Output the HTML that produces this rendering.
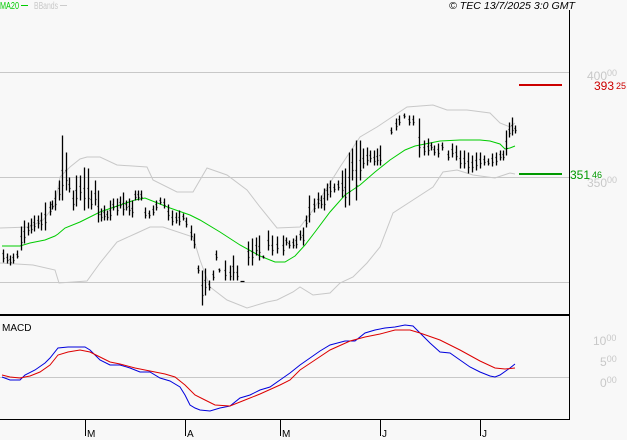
<!DOCTYPE html>
<html><head><meta charset="utf-8"><style>
html,body{margin:0;padding:0;background:#f8f8f8;}
body{width:627px;height:440px;overflow:hidden;position:relative;font-family:"Liberation Sans",Arial,sans-serif;}
svg{position:absolute;left:0;top:0;}
</style></head><body>
<svg width="627" height="440" viewBox="0 0 627 440" xmlns="http://www.w3.org/2000/svg">
<rect width="627" height="440" fill="#f8f8f8"/>
<g shape-rendering="crispEdges">
<line x1="0" y1="72.5" x2="569" y2="72.5" stroke="#c8c8c8"/>
<line x1="0" y1="177.5" x2="569" y2="177.5" stroke="#c8c8c8"/>
<line x1="0" y1="282.5" x2="569" y2="282.5" stroke="#c8c8c8"/>
<line x1="0" y1="377.5" x2="569" y2="377.5" stroke="#c8c8c8"/>
<line x1="569.5" y1="10" x2="569.5" y2="420" stroke="#000"/>
<line x1="0" y1="315" x2="569" y2="315" stroke="#000" stroke-width="2"/>
<line x1="0" y1="419.5" x2="570" y2="419.5" stroke="#000"/>
<rect x="519" y="84" width="43" height="2" fill="#cc0000"/>
<rect x="519" y="173" width="43" height="2" fill="#009900"/>
<path d="M85.5 420V436M185.5 420V436M280.5 420V436M380.5 420V436M480.5 420V436" stroke="#000"/>
<line x1="21" y1="5.5" x2="28" y2="5.5" stroke="#00cc00"/>
<line x1="60" y1="5.5" x2="67" y2="5.5" stroke="#cccccc"/>
</g>
<!-- bands -->
<polyline fill="none" stroke="#c8c8c8" points="0,228 30,227 43,220 55,205 60,177 70,167 80,159 87,157 100,157 117,165 147,167 153,180 177,192 193,192 207,168 227,175 247,190 260,207 277,228 300,227 313,210 330,183 340,167 360,137 377,127 407,107 433,105 447,110 467,110 490,113 500,123 510,127 515,123"/>
<polyline fill="none" stroke="#c8c8c8" points="0,263 33,265 55,270 59,283 87,281 100,263 117,242 137,233 150,227 163,227 193,237 200,260 210,287 227,300 247,308 267,302 277,300 293,292 300,287 313,295 330,293 340,283 353,277 367,263 380,247 393,213 413,200 433,187 443,172 457,170 473,175 495,178 510,173 515,174"/>
<!-- MA -->
<polyline fill="none" stroke="#00cc00" points="2,246 20,246 30,243 45,240 55,236 58,234 65,228 80,222 100,212 120,205 135,200 145,198 155,202 170,208 190,215 200,220 220,232 240,245 260,256 275,262 285,262 295,256 305,245 315,232 330,212 345,195 360,185 375,172 390,160 405,150 415,146 430,143 440,141 460,140 480,140 490,141 500,144 505,149 510,148 515,146"/>
<!-- bars -->
<path fill="none" stroke="#000" stroke-width="1.3" transform="translate(0.5,0.5)" d="
M3 249V262m-1-9h1m0 5h1 M7 253V263m-1-6h1m0 3h1 M10 255V265m-1-6h1m0 3h1 M13 253V263m-1-6h1m0 3h1 M17 250V258m-1-4h1m0 2h1
M21 226V250m-1-14h1m0 6h1 M24 220V243m-1-12h1m0 6h1 M28 222V235m-1-8h1m0 3h1 M31 218V233m-1-8h1m0 4h1 M34 215V231m-1-9h1m0 4h1
M38 215V228m-1-8h1m0 3h1 M41 212V230m-1-10h1m0 4h1 M45 202V230m-1-16h1m0 8h1 M50 201V215m-1-8h1m0 4h1 M52 200V209m-1-5h1m0 2h1
M55 190V210m-1-12h1m0 6h1 M59 180V200m-1-12h1m0 6h1 M62 135V200m-1-30h1m0 15h1 M66 152V190m-1-20h1m0 10h1 M69 177V192m-1-8h1m0 4h1
M73 190V210m-1-12h1m0 6h1 M76 175V206m-1-16h1m0 8h1 M80 175V200m-1-14h1m0 6h1 M84 167V210m-1-22h1m0 10h1 M88 168V208m-1-20h1m0 10h1
M91 190V209m-1-10h1m0 5h1 M95 180V205m-1-12h1m0 6h1 M98 190V222m-1-16h1m0 8h1 M101 208V221m-1-7h1m0 3h1 M104 205V220m-1-8h1m0 4h1
M107 210V220m-1-6h1m0 3h1 M110 200V220m-1-10h1m0 5h1 M113 198V210m-1-6h1m0 3h1 M117 198V215m-1-9h1m0 4h1 M120 196V208m-1-6h1m0 3h1
M123 192V215m-1-12h1m0 6h1 M126 200V210m-1-6h1m0 3h1 M129 198V215m-1-9h1m0 4h1 M132 200V217m-1-9h1m0 4h1 M135 190V200m-1-6h1m0 3h1
M138 190V200m-1-6h1m0 3h1 M141 190V200m-1-6h1m0 3h1 M145 207V218m-1-6h1m0 3h1 M149 210V218m-1-5h1m0 2h1 M153 205V215m-1-6h1m0 3h1
M156 200V210m-1-6h1m0 3h1 M160 197V204m-1-4h1m0 2h1 M164 198V208m-1-6h1m0 3h1 M168 204V220m-1-9h1m0 4h1 M172 210V225m-1-8h1m0 4h1
M176 212V223m-1-6h1m0 3h1 M179 210V225m-1-8h1m0 4h1 M183 213V220m-1-4h1m0 2h1 M186 217V227m-1-6h1m0 3h1 M191 225V240m-1-8h1m0 4h1
M194 233V248m-1-8h1m0 4h1 M198 265V273m-1-5h1m0 2h1 M202 270V305m-1-20h1m0 10h1 M205 268V295m-1-15h1m0 7h1 M209 280V290m-1-6h1m0 3h1
M213 270V280m-1-6h1m0 3h1 M216 250V260m-1-6h1m0 3h1 M219 268V272m-1-3h1m0 1h1 M225 260V280m-1-10h1m0 5h1 M230 265V280m-1-8h1m0 4h1
M233 255V280m-1-14h1m0 6h1 M237 265V280m-1-8h1m0 4h1 M240 281H244 M248 241V265m-1-14h1m0 6h1 M252 238V265m-1-14h1m0 6h1
M256 237V255m-1-10h1m0 5h1 M259 235V260m-1-14h1m0 6h1 M263 255V258m-1-2h1m0 1h1 M268 230V250m-1-10h1m0 5h1 M272 235V255m-1-10h1m0 5h1
M277 236V253m-1-9h1m0 4h1 M283 235V255m-1-10h1m0 5h1 M286 237V245m-1-5h1m0 2h1 M289 240V248m-1-5h1m0 2h1 M293 238V248m-1-6h1m0 3h1
M296 235V248m-1-8h1m0 4h1 M300 230V240m-1-6h1m0 3h1 M303 227V245m-1-10h1m0 5h1 M306 215V227m-1-7h1m0 3h1 M309 195V222m-1-15h1m0 7h1
M314 198V212m-1-8h1m0 4h1 M318 192V208m-1-9h1m0 4h1 M321 195V208m-1-8h1m0 4h1 M324 188V210m-1-12h1m0 6h1 M327 183V200m-1-10h1m0 4h1
M330 180V197m-1-10h1m0 4h1 M334 183V192m-1-5h1m0 2h1 M338 180V190m-1-6h1m0 3h1 M342 170V197m-1-14h1m0 7h1 M345 168V207m-1-20h1m0 10h1
M349 152V205m-1-28h1m0 14h1 M352 148V180m-1-18h1m0 8h1 M356 140V200m-1-30h1m0 15h1 M360 140V180m-1-20h1m0 10h1 M363 148V168m-1-10h1m0 5h1
M367 147V165m-1-10h1m0 5h1 M370 150V162m-1-7h1m0 3h1 M374 150V165m-1-8h1m0 4h1 M377 148V165m-1-9h1m0 4h1 M380 145V165m-1-10h1m0 5h1
M391 127V134m-1-4h1m0 2h1 M396 118V130m-1-7h1m0 3h1 M399 115V125m-1-6h1m0 3h1 M404 113V118m-1-3h1m0 1h1 M409 115V125m-1-6h1m0 3h1
M413 115V125m-1-6h1m0 3h1 M419 118V157m-1-20h1m0 10h1 M424 140V155m-1-8h1m0 4h1 M428 138V155m-1-9h1m0 4h1 M431 142V150m-1-5h1m0 2h1
M434 145V155m-1-6h1m0 3h1 M438 143V157m-1-8h1m0 4h1 M442 142V150m-1-5h1m0 2h1 M448 150V160m-1-6h1m0 3h1 M452 143V157m-1-8h1m0 4h1
M456 145V160m-1-8h1m0 4h1 M460 150V168m-1-10h1m0 5h1 M464 150V168m-1-10h1m0 5h1 M468 152V173m-1-12h1m0 6h1 M472 155V172m-1-10h1m0 5h1
M476 152V170m-1-10h1m0 5h1 M480 152V168m-1-9h1m0 4h1 M484 155V165m-1-6h1m0 3h1 M488 158V165m-1-4h1m0 2h1 M492 153V166m-1-8h1m0 4h1
M496 152V165m-1-8h1m0 4h1 M500 150V160m-1-6h1m0 3h1 M503 150V160m-1-6h1m0 3h1 M506 130V155m-1-14h1m0 7h1 M509 122V137m-1-8h1m0 4h1
M512 117V135m-1-10h1m0 5h1 M515 125V133m-1-5h1m0 2h1"/>
<!-- MACD -->
<polyline fill="none" stroke="#0000dd" points="2,377 10,380 20,380 25,375 35,370 45,363 50,358 58,348 68,347 78,347 85,347 90,350 100,360 110,365 120,365 130,368 140,372 150,372 160,378 170,381 180,387 185,395 190,405 195,408 200,410 210,411 220,408 230,406 240,398 250,395 260,390 270,387 280,380 290,373 300,365 310,358 320,351 330,345 345,341 355,341 365,333 375,330 385,328 395,327 405,325 413,326 420,333 430,343 440,352 450,353 460,360 470,367 480,372 490,376 495,377 500,375 510,368 515,364"/>
<polyline fill="none" stroke="#dd0000" points="2,375 10,377 20,378 30,376 40,372 50,365 58,355 68,352 80,350 90,352 100,357 110,362 120,364 135,368 150,371 165,374 175,377 185,385 195,395 205,400 215,405 230,406 245,400 260,394 280,385 290,380 300,370 315,360 330,350 350,341 365,337 380,334 395,330 410,330 420,333 440,340 460,350 480,361 495,368 505,369 515,368"/>
<!-- text -->
<g font-family="Liberation Sans, Arial, sans-serif" font-size="10">
<text x="0" y="9" fill="#00cc00" textLength="19" lengthAdjust="spacingAndGlyphs">MA20</text>
<text x="34" y="9" fill="#c8c8c8" textLength="24" lengthAdjust="spacingAndGlyphs">BBands</text>
<text x="449" y="9" fill="#000" font-style="italic" textLength="126" lengthAdjust="spacingAndGlyphs">© TEC 13/7/2025 3:0 GMT</text>
<text x="2" y="331" fill="#000">MACD</text>
<text x="587" y="80" fill="#c8c8c8" font-size="12">400<tspan font-size="9" dy="-4">00</tspan></text>
<text x="587" y="187" fill="#c8c8c8" font-size="12">350<tspan font-size="9" dy="-4">00</tspan></text>
<text x="594" y="90" fill="#cc0000" font-size="12">393<tspan font-size="9" dy="-1" dx="2">25</tspan></text>
<text x="570" y="179" fill="#009900" font-size="12">351<tspan font-size="9" dy="-1" dx="2">46</tspan></text>
<text x="593" y="345" fill="#c8c8c8" font-size="12">10<tspan font-size="9" dy="-4">00</tspan></text>
<text x="600" y="366" fill="#c8c8c8" font-size="12">5<tspan font-size="9" dy="-4">00</tspan></text>
<text x="600" y="387" fill="#c8c8c8" font-size="12">0<tspan font-size="9" dy="-4">00</tspan></text>
<text x="87" y="437" fill="#000">M</text>
<text x="187" y="437" fill="#000">A</text>
<text x="282" y="437" fill="#000">M</text>
<text x="382" y="437" fill="#000">J</text>
<text x="482" y="437" fill="#000">J</text>
</g>
</svg>
</body></html>
